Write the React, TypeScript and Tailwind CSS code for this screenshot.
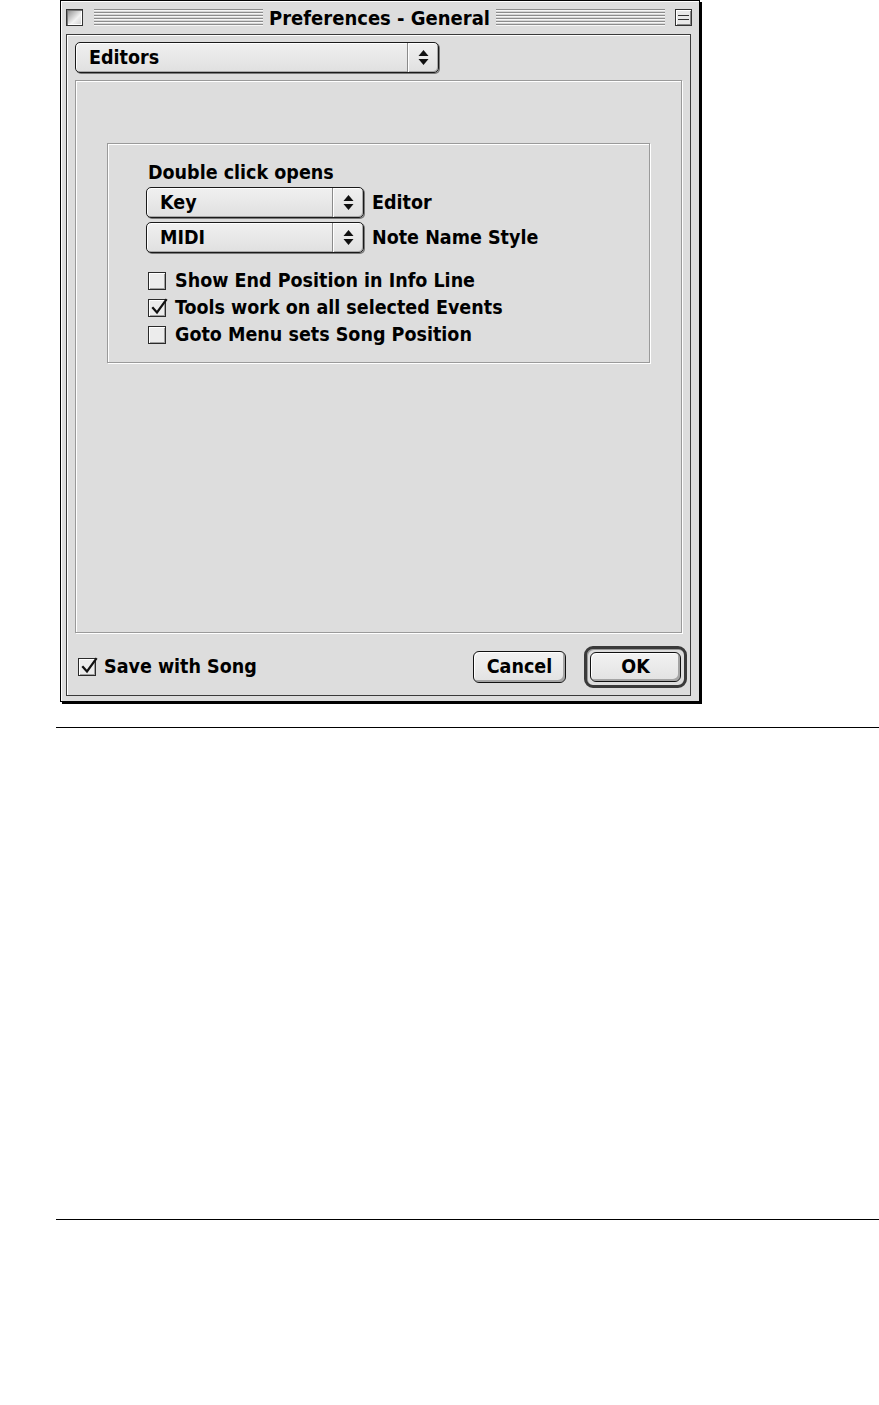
import type { ReactNode } from 'react';

const FONT = "font-['DejaVu_Sans_Condensed','DejaVu_Sans',sans-serif] font-bold";

function Stripes() {
  return (
    <div className="h-[17px] flex-1 bg-[repeating-linear-gradient(to_bottom,#8c8c8c_0px,#8c8c8c_1px,#f6f6f6_1px,#f6f6f6_2px,#d6d6d6_2px,#d6d6d6_3px)]" />
  );
}

function Arrows() {
  return (
    <svg width="11" height="17" viewBox="0 0 11 17">
      <path d="M5.5 1 L10.5 7 L0.5 7 Z" fill="#111" />
      <path d="M0.5 10 L10.5 10 L5.5 16 Z" fill="#111" />
    </svg>
  );
}

function Popup({ label, width }: { label: string; width: string }) {
  return (
    <div
      className={`flex h-[31px] ${width} rounded-[5px] border border-[#1a1a1a] bg-[linear-gradient(#f0f0f0,#e0e0e0)] shadow-[1px_1px_0_#7a7a7a,inset_1px_1px_0_#fff,inset_-1px_-1px_0_#a8a8a8]`}
    >
      <div className="flex flex-1 items-center pl-[13px] text-[19.5px] leading-none text-black">
        {label}
      </div>
      <div className="flex w-[31px] items-center justify-center border-l border-[#8a8a8a] shadow-[inset_1px_0_0_#fff]">
        <Arrows />
      </div>
    </div>
  );
}

function Checkbox({ checked }: { checked?: boolean }) {
  return (
    <div className="relative h-[18px] w-[18px] shrink-0 border border-[#2a2a2a] bg-[#ececec] shadow-[inset_1px_1px_0_#fff,inset_-1px_-1px_0_#a0a0a0]">
      {checked && (
        <svg
          className="absolute left-[1px] top-[-3px]"
          width="19"
          height="20"
          viewBox="0 0 19 20"
        >
          <path
            d="M3 11 L7 15.5 L16 3"
            fill="none"
            stroke="#111"
            strokeWidth="2.2"
            strokeLinecap="square"
          />
        </svg>
      )}
    </div>
  );
}

function CheckRow({ checked, children }: { checked?: boolean; children: ReactNode }) {
  return (
    <div className="flex h-[27px] items-center gap-[9px]">
      <Checkbox checked={checked} />
      <span className="text-[19.5px] leading-none">{children}</span>
    </div>
  );
}

function Button({ children, className }: { children: ReactNode; className: string }) {
  return (
    <div
      className={`flex items-center justify-center rounded-[6px] border border-[#111] bg-[linear-gradient(#f2f2f2,#e2e2e2)] text-[19.5px] leading-none shadow-[inset_1px_1px_0_#fff,inset_-2px_-2px_0_#a4a4a4] ${className}`}
    >
      {children}
    </div>
  );
}

export default function App() {
  return (
    <div className={`min-h-[1405px] w-[879px] bg-white text-black ${FONT}`}>
      {/* window */}
      <div className="ml-[60px] h-[702px] w-[640px] border border-black bg-[#dddddd] shadow-[2px_2px_0_#000,inset_1px_1px_0_#fff]">
        {/* title bar */}
        <div className="flex h-[33px] items-center pl-[5px] pr-[7px]">
          <div className="h-[17px] w-[17px] border border-[#333] bg-[linear-gradient(135deg,#8a8a8a,#f2f2f2_60%,#cfcfcf)] shadow-[inset_1px_1px_0_#777,inset_-1px_-1px_0_#fff]" />
          <div className="ml-[11px] flex flex-1 items-center">
            <Stripes />
            <span className="px-[6px] text-[20px] leading-none">Preferences - General</span>
            <Stripes />
          </div>
          <div className="ml-[10px] flex h-[17px] w-[17px] flex-col border border-[#333] bg-[#e8e8e8] shadow-[inset_1px_1px_0_#fff,inset_-1px_-1px_0_#888]">
            <div className="mx-[2px] mt-[5px] h-[1px] bg-[#333]" />
            <div className="mx-[2px] mt-[3px] h-[1px] bg-[#333]" />
          </div>
        </div>

        {/* content frame */}
        <div className="ml-[5px] h-[662px] w-[625px] border border-[#3a3a3a] bg-[#dddddd] px-[8px] pt-[7px] shadow-[inset_1px_1px_0_#fff]">
          <Popup label="Editors" width="w-[364px]" />

          {/* panel */}
          <div className="mt-[7px] h-[553px] w-[607px] border border-[#9a9a9a] pt-[62px] pl-[31px] shadow-[1px_1px_0_#fff,inset_1px_1px_0_#fff]">
            <div className="h-[220px] w-[543px] border border-[#9a9a9a] pl-[38px] pt-[19px] shadow-[1px_1px_0_#fff,inset_1px_1px_0_#fff]">
              <div className="ml-[2px] flex h-[20px] items-center text-[19.5px] leading-none">
                Double click opens
              </div>
              <div className="mt-[4px] flex items-center gap-[8px]">
                <Popup label="Key" width="w-[218px]" />
                <span className="text-[19.5px] leading-none">Editor</span>
              </div>
              <div className="mt-[4px] flex items-center gap-[8px]">
                <Popup label="MIDI" width="w-[218px]" />
                <span className="text-[19.5px] leading-none">Note Name Style</span>
              </div>
              <div className="ml-[2px] mt-[14px] flex flex-col">
                <CheckRow>Show End Position in Info Line</CheckRow>
                <CheckRow checked>Tools work on all selected Events</CheckRow>
                <CheckRow>Goto Menu sets Song Position</CheckRow>
              </div>
            </div>
          </div>

          {/* bottom row */}
          <div className="-mr-[5px] mt-[13px] flex h-[42px] items-center pl-[3px]">
            <div className="flex items-center gap-[8px]">
              <Checkbox checked />
              <span className="text-[19.5px] leading-none">Save with Song</span>
            </div>
            <div className="flex-1" />
            <Button className="h-[32px] w-[93px]">Cancel</Button>
            <div className="ml-[18px] flex h-[42px] w-[103px] items-center justify-center rounded-[9px] border-[3px] border-[#3a3a3a] bg-[#dddddd] shadow-[inset_1px_1px_0_#999]">
              <Button className="h-[30px] w-[91px]">OK</Button>
            </div>
          </div>
        </div>
      </div>

      {/* rules */}
      <div className="ml-[56px] mt-[25px] h-[1px] bg-black" />
      <div className="ml-[56px] mt-[491px] h-[1px] bg-black" />
    </div>
  );
}
